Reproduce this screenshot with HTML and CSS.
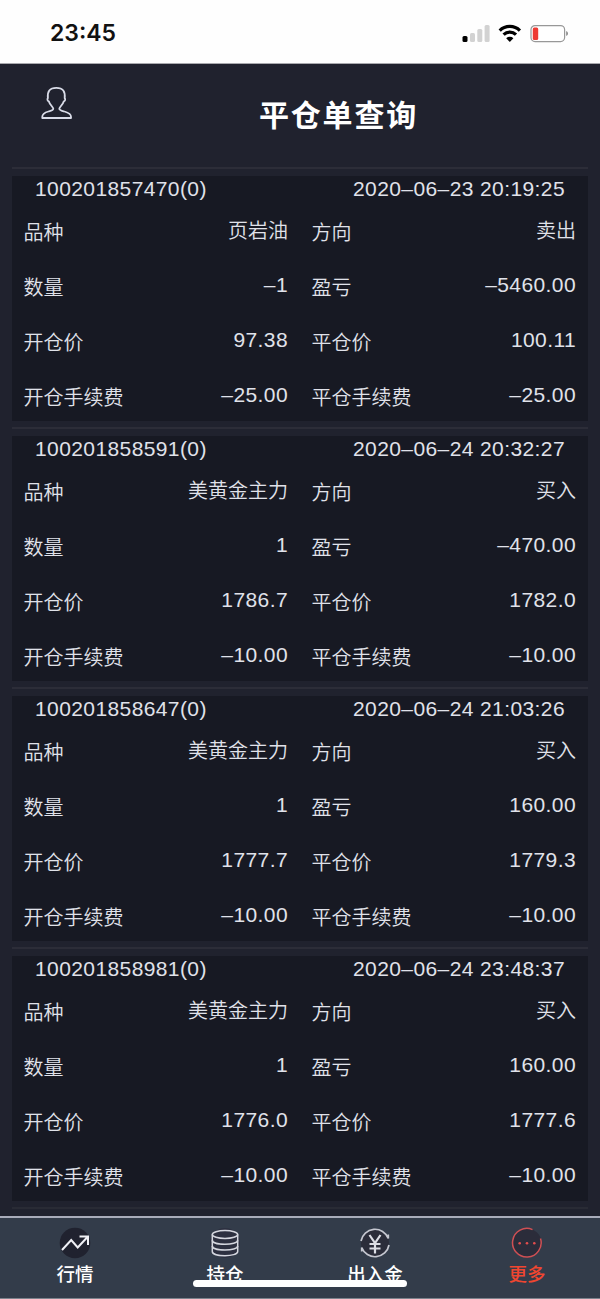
FILE: index.html
```html
<!DOCTYPE html>
<html lang="zh-CN">

<head>
    <meta charset="UTF-8">
    <meta name="viewport" content="width=device-width, initial-scale=1.0">
    <title>平仓单查询</title>
    <link rel="stylesheet" href="styles.css">
</head>

<body>
    <div class="status-bar">
        <span class="time">23:45</span>
        <svg class="status-icons" width="108" height="20" viewBox="0 0 108 20">
            <rect x="2.5" y="13" width="5" height="6" rx="1.5" fill="#000" />
            <rect x="10" y="10" width="5" height="9" rx="1.5" fill="#d2d2d2" />
            <rect x="17.3" y="6" width="5" height="13" rx="1.5" fill="#d2d2d2" />
            <rect x="24.6" y="2" width="5" height="17" rx="1.5" fill="#d2d2d2" />
            <g fill="none" stroke="#000" stroke-width="3.2">
                <path d="M39.7 7.6a14.3 14.3 0 0 1 20.2 0" />
                <path d="M43.6 11.6a8.8 8.8 0 0 1 12.4 0" />
            </g>
            <path d="M46.2 15.2a5.2 5.2 0 0 1 7.2 0l-3.6 3.7z" fill="#000" />
            <rect x="71" y="2.6" width="33.6" height="16" rx="4" fill="#fff" stroke="#989898" stroke-width="1.2" />
            <rect x="72.8" y="4.5" width="5.4" height="12.4" rx="1.5" fill="#ee3b34" />
            <path d="M106.2 8v5q1.8-.8 1.8-2.5t-1.8-2.5z" fill="#888" />
        </svg>
    </div>

    <div class="header">
        <svg class="user-icon" width="32" height="34" viewBox="0 0 32 34">
            <path d="M1.3 32v-1.2C1.3 28 4 26.5 7.500 25.500C10.500 24.700 12.300 24.300 12.300 22.800C12.300 21.300 8.600 18.500 7.800 15.300C6.500 15 5.900 13.200 6.900 12.200C6.200 5.500 8.500 1.800 15.300 1.800S24.400 5.500 23.700 12.200C24.700 13.200 24.100 15 22.800 15.300C22 18.500 18.300 21.300 18.300 22.800C18.300 24.300 20.500 24.700 23.500 25.500C27 26.500 30 28 30 30.800V32z" fill="none" stroke="#d9dce8" stroke-width="1.8" stroke-linejoin="round" />
        </svg>
        <h1>平仓单查询</h1>
    </div>

    <div class="list" id="list"></div>

    <div class="tabs">
        <div class="tab">
            <svg width="32" height="32" viewBox="0 0 32 32">
                <circle cx="16" cy="16" r="15.3" fill="#20222f" />
                <path d="M3 23l9.200-10 6.500 7.500L28.500 10M20.500 9.500h8.500v8.500" fill="none" stroke="#f0f1f6" stroke-width="2" />
            </svg>
            <span>行情</span>
        </div>
        <div class="tab">
            <svg width="32" height="32" viewBox="0 0 32 32">
                <circle cx="16" cy="16" r="15" fill="#2d3040" />
                <g fill="none" stroke="#d5d7df" stroke-width="1.5">
                    <ellipse cx="16" cy="7.5" rx="12.7" ry="4" />
                    <path d="M3.3 7.5v17c0 5.6 25.4 5.6 25.4 0v-17" />
                    <path d="M3.3 13.2c0 5.4 25.4 5.4 25.4 0M3.3 18.9c0 5.4 25.4 5.4 25.4 0" />
                </g>
            </svg>
            <span>持仓</span>
        </div>
        <div class="tab">
            <svg width="32" height="32" viewBox="0 0 32 32">
                <circle cx="16" cy="16" r="14" fill="#2b2d3a" />
                <g fill="none" stroke="#c5c7d0" stroke-width="1.7">
                    <path d="M2 14A14.2 14.2 0 0 1 29.3 11.5V7.500M30 18A14.2 14.2 0 0 1 2.700 20.500V24.500" />
                </g>
                <path d="M10.5 8l5.5 8 5.5-8M16 16v10.5M10.5 17h11M10.5 21.500h11" fill="none" stroke="#dcdee5" stroke-width="2.200" />
            </svg>
            <span>出入金</span>
        </div>
        <div class="tab active">
            <svg width="32" height="32" viewBox="0 0 32 32">
                <circle cx="16" cy="16" r="14.5" fill="#2b2c3a" />
                <path d="M21.5 2.6A14.3 14.3 0 1 0 29.5 11.5" fill="none" stroke="#cf5054" stroke-width="1.5" />
                <circle cx="8.7" cy="16.2" r="1.3" fill="#e34d4d" />
                <circle cx="16" cy="16.2" r="1.3" fill="#e34d4d" />
                <circle cx="23.3" cy="16.2" r="1.3" fill="#e34d4d" />
            </svg>
            <span>更多</span>
        </div>
        <div class="home-indicator"></div>
    </div>

    <script src="script.js"></script>
</body>

</html>
```

FILE: styles.css
```css
* {
    box-sizing: border-box;
}

body {
    margin: 0;
    height: 1299px;
    overflow: hidden;
    display: flex;
    flex-direction: column;
    font-family: Inter, "Noto Sans CJK SC", sans-serif;
    background-color: #20222e;
    color: #e0e2ea;
}

.status-bar {
    height: 64px;
    flex: none;
    display: flex;
    justify-content: space-between;
    align-items: center;
    padding: 2px 32px 0 50px;
    background-color: #fefefe;
    border-bottom: 1px solid #a9a9ae;
}

.time {
    font-size: 23px;
    font-weight: 600;
    color: #111;
}

.header {
    height: 103px;
    flex: none;
    display: flex;
    align-items: flex-start;
    padding: 22px 0 0 41px;
}

.header h1 {
    margin: 7px 0 0 186px;
    font-size: 30px;
    line-height: 44px;
    letter-spacing: 1.8px;
    font-weight: 700;
    white-space: nowrap;
    color: #fff;
}

.list {
    flex: 1;
    min-height: 0;
    overflow: hidden;
    padding: 0 12px;
}

.order {
    height: 260px;
    border-top: 2px solid #2c2d38;
    padding-top: 7px;
}

.order-body {
    height: 245px;
    background-color: #171923;
}

.list-end {
    height: 2px;
    background-color: #292b35;
}

.order-head {
    height: 25px;
    display: flex;
    justify-content: space-between;
    padding: 0 23px;
    line-height: 26px;
}

.order-grid {
    display: grid;
    grid-template-columns: 1fr 1fr;
    grid-auto-rows: 55px;
}

.cell {
    display: flex;
    justify-content: space-between;
    padding: 14px 12px 0 11.5px;
    font-family: "Noto Sans CJK SC", sans-serif;
    font-size: 20px;
    line-height: 30px;
    font-weight: 350;
    white-space: nowrap;
}

.label {
    padding-top: 2px;
}

.num {
    font-family: "Liberation Sans", sans-serif;
    font-size: 21px;
    letter-spacing: 0.4px;
}

.tabs {
    position: relative;
    height: 83px;
    flex: none;
    display: grid;
    grid-template-columns: repeat(4, 1fr);
    background-color: #333c4a;
    border-top: 2px solid #a9acba;
    border-bottom: 1px solid #7c828c;
}

.tab {
    display: flex;
    flex-direction: column;
    align-items: center;
    padding-top: 9px;
    font-size: 18.5px;
    line-height: 28px;
    font-weight: 500;
    color: #fff;
}

.tab span {
    margin-top: 1px;
}

.active {
    padding-left: 4px;
    color: #ef4630;
}

.home-indicator {
    position: absolute;
    left: 193px;
    top: 62px;
    width: 214px;
    height: 7px;
    border-radius: 4px;
    background-color: #fff;
}
```

FILE: script.js
```js
var orders = [
    ["100201857470(0)", "2020–06–23 20:19:25", "页岩油", "卖出", "–1", "–5460.00", "97.38", "100.11", "–25.00", "–25.00"],
    ["100201858591(0)", "2020–06–24 20:32:27", "美黄金主力", "买入", "1", "–470.00", "1786.7", "1782.0", "–10.00", "–10.00"],
    ["100201858647(0)", "2020–06–24 21:03:26", "美黄金主力", "买入", "1", "160.00", "1777.7", "1779.3", "–10.00", "–10.00"],
    ["100201858981(0)", "2020–06–24 23:48:37", "美黄金主力", "买入", "1", "160.00", "1776.0", "1777.6", "–10.00", "–10.00"]
];
var labels = ["品种", "方向", "数量", "盈亏", "开仓价", "平仓价", "开仓手续费", "平仓手续费"];

var html = "";
orders.forEach(order => {
    html += '<div class="order"><div class="order-body">';
    html += '<div class="order-head num"><span>' + order[0] + '</span><span>' + order[1] + '</span></div>';
    html += '<div class="order-grid">';
    labels.forEach((label, i) => {
        // first row holds text, the rest are numbers
        var cls = i < 2 ? 'value' : 'value num';
        html += '<div class="cell"><span class="label">' + label + '</span><span class="' + cls + '">' + order[i + 2] + '</span></div>';
    });
    html += '</div></div></div>';
});
document.getElementById('list').innerHTML = html + '<div class="list-end"></div>';
```
